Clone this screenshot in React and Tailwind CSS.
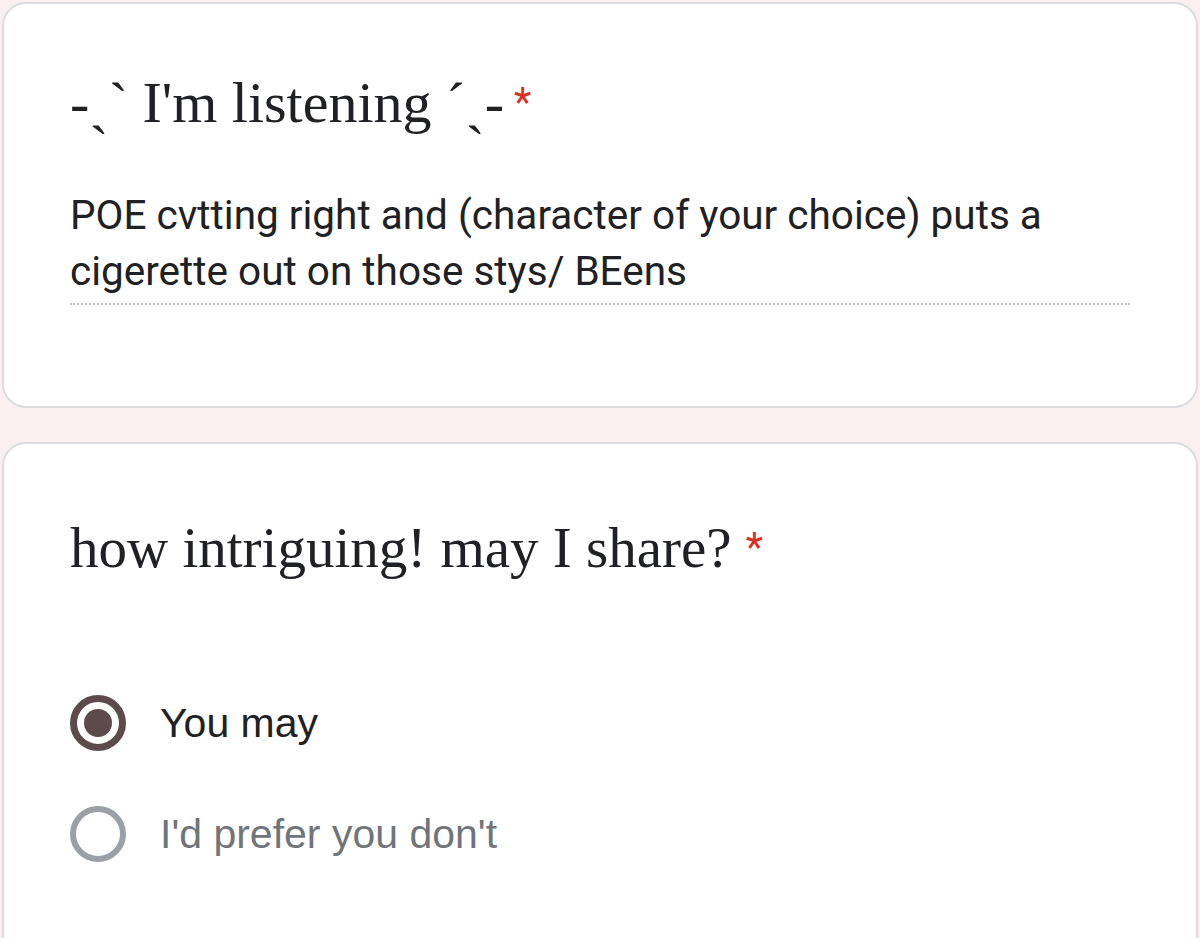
export default function App() {
  return (
    <div className="h-[938px] w-[1200px] overflow-hidden bg-[#faf0f1] px-[2px] pt-[2px]">
      {/* Short answer question */}
      <div className="h-[406px] rounded-[24px] border-2 border-[#dadce0] bg-white pl-[66px] pr-[66px] pt-[69px]">
        <div className="flex items-start font-['Liberation_Serif',serif] text-[58px] leading-[60px] text-[#202124]">
          <span>-ˏˋ I'm listening ˊˎ-</span>
          <span className="ml-[10px] mt-[10px] font-['Roboto',sans-serif] text-[40px] leading-[40px] text-[#d93025]">*</span>
        </div>
        <div className="mt-[54px] border-b-2 border-dotted border-[#bdc1c6] pb-[4px] font-['Roboto',sans-serif] text-[40.5px] leading-[56px] text-[#202124]">
          POE cvtting right and (character of your choice) puts a cigerette out on those stys/ BEens
        </div>
      </div>

      {/* Multiple choice question */}
      <div className="mt-[34px] h-[600px] rounded-[24px] border-2 border-[#dadce0] bg-white pl-[66px] pr-[66px] pt-[74px]">
        <div className="flex items-start font-['Liberation_Serif',serif] text-[57px] leading-[60px] text-[#202124]">
          <span>how intriguing! may I share?</span>
          <span className="ml-[14px] mt-[10px] font-['Roboto',sans-serif] text-[40px] leading-[40px] text-[#d93025]">*</span>
        </div>
        <div className="mt-[115px] flex flex-col gap-[51px] font-['Liberation_Sans',Arial,sans-serif] text-[41px] leading-[60px]">
          <label className="flex items-center gap-[34px] text-[#202124]">
            <span className="flex h-[56px] w-[56px] items-center justify-center rounded-full border-[7px] border-[#5d4a4c]">
              <span className="h-[28px] w-[28px] rounded-full bg-[#5d4a4c]" />
            </span>
            You may
          </label>
          <label className="flex items-center gap-[34px] text-[#70757a]">
            <span className="h-[56px] w-[56px] rounded-full border-[6px] border-[#9aa0a6]" />
            I'd prefer you don't
          </label>
        </div>
      </div>
    </div>
  );
}
